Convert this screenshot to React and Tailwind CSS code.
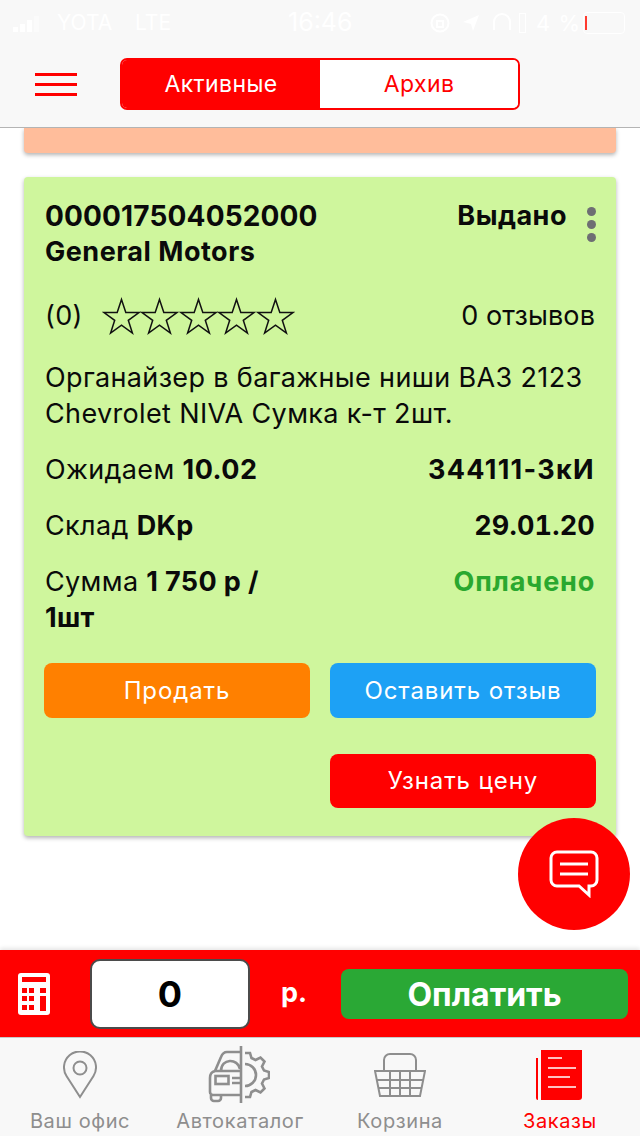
function StatusBar() {
  return (
    <div className="h-[44px] flex items-center pl-[13px] text-white text-[21px] leading-none pt-[1px] whitespace-nowrap">
      <div className="flex items-end gap-[2px] h-[20px] w-[34px] pb-[1px]">
        <div className="w-[5px] h-[5px] bg-white" />
        <div className="w-[5px] h-[8px] bg-white" />
        <div className="w-[5px] h-[12px] bg-white" />
        <div className="w-[5px] h-[16px] bg-white opacity-40" />
      </div>
      <span className="ml-[10px] w-[58px]">YOTA</span>
      <span className="ml-[20px] w-[40px]">LTE</span>
      <span className="ml-[113px] w-[66px] text-[25px]">16:46</span>
      <svg className="ml-[76px]" width="20" height="22" viewBox="0 0 20 22" fill="none" stroke="#fff" strokeWidth="2"><circle cx="10" cy="11" r="8.5" /><rect x="7" y="9" width="6" height="6" /></svg>
      <svg className="ml-[12px]" width="18" height="20" viewBox="0 0 18 20" fill="#fff"><path d="M1 9 17 2l-6 16-2-7z" /></svg>
      <svg className="ml-[12px]" width="20" height="22" viewBox="0 0 20 22" fill="none" stroke="#fff" strokeWidth="2"><path d="M2 18V10a8 8 0 0 1 16 0v8" /></svg>
      <div className="ml-[7px] w-[7px] h-[20px] border border-white" />
      <span className="ml-[10px] w-[44px] tracking-[1px] text-[22px]">4 %</span>
      <div className="ml-[3px] w-[42px] h-[22px] border border-white rounded-[4px] flex items-center pl-[1px]">
        <div className="w-[2px] h-[14px] bg-[#ff3b30]" />
      </div>
    </div>
  );
}

function Header() {
  return (
    <div className="bg-[#f8f8f8] border-b border-[#b4b4b4] h-[128px] shrink-0 relative z-10">
      <StatusBar />
      <div className="flex items-center pl-[35px] pt-[14px]">
        <div className="flex flex-col gap-[7px] w-[42px]">
          <div className="h-[3px] bg-[#ff0000]" />
          <div className="h-[3px] bg-[#ff0000]" />
          <div className="h-[3px] bg-[#ff0000]" />
        </div>
        <div className="ml-[43px] flex w-[400px] h-[52px] rounded-[7px] border-2 border-[#ff0000] overflow-hidden text-[23px] tracking-[0.4px]">
          <div className="w-[198px] bg-[#ff0000] text-white flex items-center justify-center">Активные</div>
          <div className="flex-1 bg-white text-[#ff0000] flex items-center justify-center">Архив</div>
        </div>
      </div>
    </div>
  );
}

function Star() {
  return (
    <svg width="39" height="38" viewBox="0 0 39 38" fill="none" stroke="#111" strokeWidth="1.5">
      <path d="M19.5 2.5 23.8 15.5H37L26.3 23.3 30.4 36 19.5 28.2 8.6 36 12.7 23.3 2 15.5H15.2Z" />
    </svg>
  );
}

function OrderCard() {
  return (
    <div className="mx-[24px] mt-[24px] h-[659px] bg-[#cff69d] rounded-[4px] shadow-[0_2px_4px_rgba(0,0,0,0.3)] px-[21px] pt-[21px] text-[#0a0a0a] text-[27px] tracking-[0.35px] leading-[36px]">
      <div className="flex justify-between font-bold tracking-[0.5px]">
        <div>
          <div className="text-[28px] tracking-[0.15px]">000017504052000</div>
          <div>General Motors</div>
        </div>
        <div className="flex">
          <span>Выдано</span>
          <div className="flex flex-col gap-[4px] ml-[20px] mr-[-1px] mt-[9px]">
            <div className="w-[9px] h-[9px] rounded-full bg-[#6e6e73]" />
            <div className="w-[9px] h-[9px] rounded-full bg-[#6e6e73]" />
            <div className="w-[9px] h-[9px] rounded-full bg-[#6e6e73]" />
          </div>
        </div>
      </div>
      <div className="flex items-center mt-[27px] h-[38px]">
        <span>(0)</span>
        <div className="flex ml-[19px] -space-x-[0.5px]">
          {[1, 2, 3, 4, 5].map((i) => (
            <Star key={i} />
          ))}
        </div>
        <span className="ml-auto tracking-[0.1px]">0 отзывов</span>
      </div>
      <div className="mt-[25px]">
        Органайзер в багажные ниши ВАЗ 2123 Chevrolet NIVA Сумка к-т 2шт.
      </div>
      <div className="flex justify-between mt-[20px]">
        <div>Ожидаем <b className="tracking-[0.5px]">10.02</b></div>
        <b className="tracking-[1.3px]">344111-3кИ</b>
      </div>
      <div className="flex justify-between mt-[20px]">
        <div>Склад <b>DKp</b></div>
        <b className="tabular-nums tracking-[0.2px]">29.01.20</b>
      </div>
      <div className="flex justify-between mt-[20px]">
        <div>
          <div>Сумма <b>1 750 р /</b></div>
          <div className="font-bold">1шт</div>
        </div>
        <b className="text-[#2aa82f] tracking-[0.8px]">Оплачено</b>
      </div>
      <div className="grid grid-cols-2 gap-x-[20px] mt-[27px] -mx-[1px] text-white text-[24px] tracking-[0.9px]">
        <button className="h-[55px] rounded-[8px] bg-[#ff8000]">Продать</button>
        <button className="h-[55px] rounded-[8px] bg-[#1da1f5]">Оставить отзыв</button>
        <button className="col-start-2 mt-[36px] h-[54px] rounded-[8px] bg-[#ff0000]">Узнать цену</button>
      </div>
    </div>
  );
}

function PayBar() {
  return (
    <div className="h-[87px] shrink-0 bg-[#ff0000] flex items-center pl-[18px] pr-[12px] shadow-[0_-2px_4px_rgba(0,0,0,0.1)]">
      <svg width="32" height="42" viewBox="0 0 32 42">
        <rect width="32" height="42" rx="3" fill="#fff" />
        <g fill="#ff0000">
          <rect x="4" y="4" width="24" height="5" />
          <rect x="4" y="15" width="5" height="5" />
          <rect x="11" y="15" width="5" height="5" />
          <rect x="22" y="15" width="6" height="5" />
          <rect x="4" y="23" width="5" height="5" />
          <rect x="11" y="23" width="5" height="5" />
          <rect x="22" y="23" width="6" height="15" />
          <rect x="4" y="32" width="5" height="5" />
          <rect x="11" y="32" width="5" height="5" />
        </g>
      </svg>
      <div className="ml-[40px] w-[160px] h-[70px] rounded-[10px] bg-white border-2 border-[#4b4b4b] flex items-center justify-center font-bold text-[36px] text-black">0</div>
      <span className="ml-[31px] font-bold text-[27px] text-white">р.</span>
      <button className="ml-auto w-[287px] h-[50px] rounded-[8px] bg-[#2aa835] text-white font-bold text-[32px] leading-none pt-[3px]">Оплатить</button>
    </div>
  );
}

function TabItem({ label, active, children }) {
  return (
    <div className="flex-1 flex flex-col items-center">
      <div className="h-[62px] flex items-center justify-center">{children}</div>
      <span className={active ? "text-[20px] tracking-[0.6px] text-[#ff0000]" : "text-[20px] tracking-[0.6px] text-[#8e8e8e]"}>{label}</span>
    </div>
  );
}

function TabBar() {
  return (
    <div className="h-[99px] shrink-0 bg-[#f8f8f8] border-t border-[#c8c8c8] flex pt-[6px]">
      <TabItem label="Ваш офис">
        <svg width="34" height="48" viewBox="0 0 34 48" fill="none" stroke="#8e8e8e" strokeWidth="2">
          <path d="M17 46 3.5 25a16 16 0 1 1 27 0Z" />
          <circle cx="17" cy="17" r="6.5" />
        </svg>
      </TabItem>
      <TabItem label="Автокаталог">
        <svg className="mr-[2px]" width="62" height="60" viewBox="0 0 62 60" fill="none" stroke="#8e8e8e" strokeWidth="2.6">
          <path d="M33 1v57" />
          <path d="M33 7H19Q15 7 13 12L7 26H33" />
          <path d="M7 26Q2 27 2 33V47a3 3 0 0 0 3 3H33" />
          <path d="M13 26c0-13 17-13 19-2" />
          <path d="M3 50v3a3 3 0 0 0 3 3h4a3 3 0 0 0 3-3v-3" />
          <rect x="7.5" y="31" width="13" height="8" />
          <path d="M24 33h9M24 38h9" />
          <path d="M37 19a11 11 0 0 1 0 22" />
          <path d="M37 8h5l1.5 5 4 2 5-2.5 4 4-2.5 5 2 4 5 1.5v6l-5 1.5-2 4 2.5 5-4 4-5-2.5-4 2-1.5 5h-5" />
        </svg>
      </TabItem>
      <TabItem label="Корзина">
        <svg width="52" height="46" viewBox="0 0 52 46" fill="none" stroke="#8e8e8e" strokeWidth="2">
          <path d="M10 19V8a6 6 0 0 1 6-6h20a6 6 0 0 1 6 6v11" />
          <path d="M1 19H51L46 44H6Z" />
          <path d="M3 28H49M4 36H48M16 19V44M26 19V44M36 19V44" />
        </svg>
      </TabItem>
      <TabItem label="Заказы" active>
        <svg className="mr-[2px]" width="46" height="50" viewBox="0 0 46 50">
          <path d="M0 8h2v42h-0a2 2 0 0 1-2-2z" fill="#ff0000" />
          <path d="M5 0h41v47a3 3 0 0 1-3 3H5z" fill="#ff0000" />
          <path d="M12 8h14M12 18h28M12 27h22M12 37h28" stroke="#fff" strokeWidth="1.5" />
        </svg>
      </TabItem>
    </div>
  );
}

export default function App() {
  return (
    <div className="relative h-[1136px] w-[640px] overflow-hidden flex flex-col bg-white font-['Inter','Noto_Sans',sans-serif]">
      <Header />
      <div className="flex-1 overflow-hidden">
        <div className="mx-[24px] h-[25px] bg-[#ffbd9b] rounded-b-[4px] shadow-[0_2px_4px_rgba(0,0,0,0.3)]" />
        <OrderCard />
      </div>
      <PayBar />
      <TabBar />
      <div className="absolute left-[518px] top-[818px] w-[112px] h-[112px] rounded-full bg-[#ff0000] flex items-center justify-center">
        <svg width="50" height="48" viewBox="0 0 50 48" fill="none" stroke="#fff" strokeWidth="3">
          <path d="M8 2h34a6 6 0 0 1 6 6v22a6 6 0 0 1-6 6h-2v9l-10-9H8a6 6 0 0 1-6-6V8a6 6 0 0 1 6-6z" />
          <path d="M11 14h28M11 24h28" />
        </svg>
      </div>
    </div>
  );
}
